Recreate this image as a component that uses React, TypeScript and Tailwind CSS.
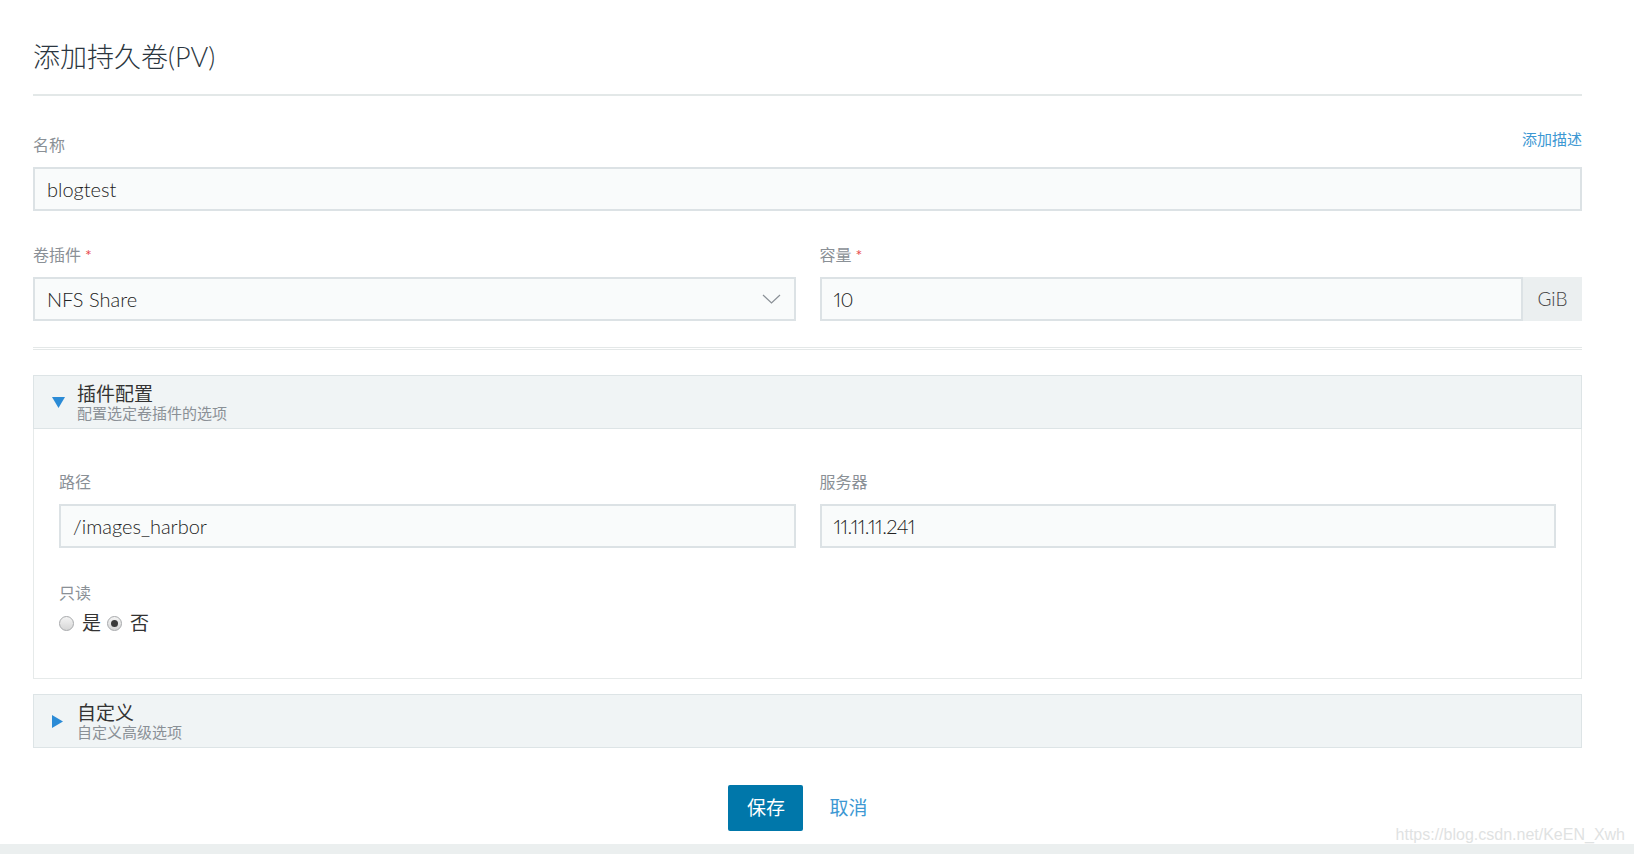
import { useState } from "react";

const font = { fontFamily: "Lato, 'Noto Sans CJK SC', sans-serif" };

const Label = ({ text, required }: { text: string; required?: boolean }) => (
  <div className="text-[16px] leading-5 text-[#8a9096]">
    {text}
    {required && <span className="ml-1 text-[#e8474b]">*</span>}
  </div>
);

const TextBox = ({ value, numeric }: { value: string; numeric?: boolean }) => (
  <div
    className={
      "mt-3 flex h-[44px] items-center border-2 border-[#dce2e5] bg-[#f9fbfb] px-3 text-[20px] font-light text-[#222] " +
      (numeric ? "proportional-nums tracking-[-0.5px]" : "")
    }
  >
    {value}
  </div>
);

const Radio = ({ checked }: { checked: boolean }) => (
  <span className="flex h-[15px] w-[15px] items-center justify-center rounded-full border border-[#a7a9ab] bg-gradient-to-b from-[#f4f4f4] to-[#d6d6d6]">
    {checked && <span className="h-[7px] w-[7px] rounded-full bg-[#3a3a3a]" />}
  </span>
);

const PanelHead = ({ title, sub, open }: { title: string; sub: string; open: boolean }) => (
  <div className="flex h-[54px] items-center border border-[#dde4e6] bg-[#f0f4f5] pl-[18px]">
    <div className="flex w-[25px] items-center">
      {open ? (
        <svg width="13" height="11" viewBox="0 0 13 11">
          <polygon points="0,0 13,0 6.5,11" fill="#2b8bd6" />
        </svg>
      ) : (
        <svg width="11" height="13" viewBox="0 0 11 13">
          <polygon points="0,0 11,6.5 0,13" fill="#2b8bd6" />
        </svg>
      )}
    </div>
    <div className="flex flex-col">
      <span className="text-[19px] leading-[21px] text-[#333]">{title}</span>
      <span className="text-[15px] leading-[18px] text-[#8a9096]">{sub}</span>
    </div>
  </div>
);

export default function App() {
  const [readOnly, setReadOnly] = useState(false);

  return (
    <div className="relative flex min-h-screen flex-col bg-white" style={font}>
      <div className="flex-1 pl-[33px] pr-[52px] pt-10">
        <h1 className="text-[27px] font-light leading-[34px] text-[#2b3640]">添加持久卷(PV)</h1>
        <div className="mt-5 h-[2px] bg-[#e3e8e8]" />

        <div className="mt-[33px] flex items-end justify-between">
          <Label text="名称" />
          <a className="mb-[6px] text-[15px] leading-5 text-[#3d98d3]">添加描述</a>
        </div>
        <TextBox value="blogtest" />

        <div className="mt-[34px] grid grid-cols-2 gap-6">
          <div>
            <Label text="卷插件" required />
            <div className="mt-3 flex h-[44px] items-center justify-between border-2 border-[#dce2e5] bg-[#f9fbfb] pl-3 pr-[13px] text-[20px] font-light text-[#222]">
              <span>NFS Share</span>
              <svg width="19" height="10" viewBox="0 0 19 10">
                <polyline points="1,1 9.5,9 18,1" fill="none" stroke="#8a9096" strokeWidth="1.2" />
              </svg>
            </div>
          </div>
          <div>
            <Label text="容量" required />
            <div className="mt-3 flex h-[44px]">
              <div className="flex flex-1 items-center border-2 border-[#dce2e5] bg-[#f9fbfb] px-3 text-[20px] font-light tracking-[-0.5px] text-[#222] proportional-nums">
                10
              </div>
              <div className="flex w-[59px] items-center justify-center bg-[#ebeff0] text-[19px] font-light text-[#444]">
                GiB
              </div>
            </div>
          </div>
        </div>

        <div className="mt-[26px] h-[3px] border-y border-[#e4e8e8]" />

        <div className="mt-[25px]">
          <PanelHead title="插件配置" sub="配置选定卷插件的选项" open />
          <div className="border border-t-0 border-[#e6eaea] px-[25px] pb-[44px] pt-[43px]">
            <div className="grid grid-cols-2 gap-6">
              <div>
                <Label text="路径" />
                <TextBox value="/images_harbor" />
              </div>
              <div>
                <Label text="服务器" />
                <TextBox value="11.11.11.241" numeric />
              </div>
            </div>
            <div className="mt-[35px]">
              <Label text="只读" />
              <div className="mt-[9px] flex h-[22px] items-center text-[19px] text-[#333]">
                <button className="flex items-center" onClick={() => setReadOnly(true)}>
                  <Radio checked={readOnly} />
                  <span className="ml-[8px]">是</span>
                </button>
                <button className="ml-[6px] flex items-center" onClick={() => setReadOnly(false)}>
                  <Radio checked={!readOnly} />
                  <span className="ml-[8px]">否</span>
                </button>
              </div>
            </div>
          </div>
        </div>

        <div className="mt-[15px]">
          <PanelHead title="自定义" sub="自定义高级选项" open={false} />
        </div>

        <div className="mt-[37px] flex items-center justify-center gap-[26px] pb-[13px] pr-[19px]">
          <button className="h-[46px] w-[75px] rounded-[2px] bg-[#0077aa] text-[19px] text-white">保存</button>
          <button className="text-[19px] text-[#3d98d3]">取消</button>
        </div>
      </div>
      <div className="h-[12px] bg-[#ebefef]" />
      <span
        className="absolute bottom-[9px] right-[9px] text-[16px] text-[#dfe2e2]"
        style={{ fontFamily: "'Liberation Sans', sans-serif" }}
      >
        https://blog.csdn.net/KeEN_Xwh
      </span>
    </div>
  );
}
